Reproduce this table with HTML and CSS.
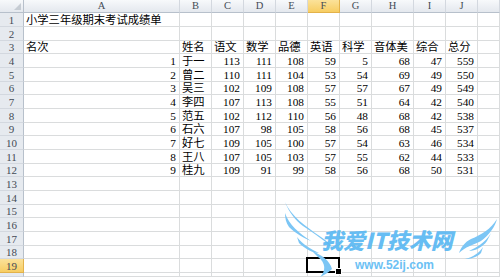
FILE: index.html
```html
<!DOCTYPE html>
<html lang="zh">
<head>
<meta charset="utf-8">
<link rel="stylesheet" href="styles.css">
</head>
<body>
<div class="sheet">
  <div class="hd corner"><span class="tri"></span></div><div class="hd">A</div><div class="hd">B</div><div class="hd">C</div><div class="hd">D</div><div class="hd">E</div><div class="hd on">F</div><div class="hd">G</div><div class="hd">H</div><div class="hd">I</div><div class="hd">J</div><div class="hd"></div>

  <div class="rh">1</div><div class="c">小学三年级期末考试成绩单</div><i></i><i></i><i></i><i></i><i></i><i></i><i></i><i></i><i></i><i></i>
  <div class="rh">2</div><i></i><i></i><i></i><i></i><i></i><i></i><i></i><i></i><i></i><i></i><i></i>
  <div class="rh">3</div><div class="c">名次</div><div class="c">姓名</div><div class="c">语文</div><div class="c">数学</div><div class="c">品德</div><div class="c">英语</div><div class="c">科学</div><div class="c">音体美</div><div class="c">综合</div><div class="c">总分</div><i></i>

  <div class="rh">4</div><div class="c n">1</div><div class="c">于一</div><div class="c n">113</div><div class="c n">111</div><div class="c n">108</div><div class="c n">59</div><div class="c n">5</div><div class="c n">68</div><div class="c n">47</div><div class="c n">559</div><i></i>
  <div class="rh">5</div><div class="c n">2</div><div class="c">曾二</div><div class="c n">110</div><div class="c n">111</div><div class="c n">104</div><div class="c n">53</div><div class="c n">54</div><div class="c n">69</div><div class="c n">49</div><div class="c n">550</div><i></i>
  <div class="rh">6</div><div class="c n">3</div><div class="c">吴三</div><div class="c n">102</div><div class="c n">109</div><div class="c n">108</div><div class="c n">57</div><div class="c n">57</div><div class="c n">67</div><div class="c n">49</div><div class="c n">549</div><i></i>
  <div class="rh">7</div><div class="c n">4</div><div class="c">李四</div><div class="c n">107</div><div class="c n">113</div><div class="c n">108</div><div class="c n">55</div><div class="c n">51</div><div class="c n">64</div><div class="c n">42</div><div class="c n">540</div><i></i>
  <div class="rh">8</div><div class="c n">5</div><div class="c">范五</div><div class="c n">102</div><div class="c n">112</div><div class="c n">110</div><div class="c n">56</div><div class="c n">48</div><div class="c n">68</div><div class="c n">42</div><div class="c n">538</div><i></i>
  <div class="rh">9</div><div class="c n">6</div><div class="c">石六</div><div class="c n">107</div><div class="c n">98</div><div class="c n">105</div><div class="c n">58</div><div class="c n">56</div><div class="c n">68</div><div class="c n">45</div><div class="c n">537</div><i></i>
  <div class="rh">10</div><div class="c n">7</div><div class="c">好七</div><div class="c n">109</div><div class="c n">105</div><div class="c n">100</div><div class="c n">57</div><div class="c n">54</div><div class="c n">63</div><div class="c n">46</div><div class="c n">534</div><i></i>
  <div class="rh">11</div><div class="c n">8</div><div class="c">王八</div><div class="c n">107</div><div class="c n">105</div><div class="c n">103</div><div class="c n">57</div><div class="c n">55</div><div class="c n">62</div><div class="c n">44</div><div class="c n">533</div><i></i>
  <div class="rh">12</div><div class="c n">9</div><div class="c">桂九</div><div class="c n">109</div><div class="c n">91</div><div class="c n">99</div><div class="c n">58</div><div class="c n">56</div><div class="c n">68</div><div class="c n">50</div><div class="c n">531</div><i></i>

  <div class="rh">13</div><i></i><i></i><i></i><i></i><i></i><i></i><i></i><i></i><i></i><i></i><i></i>
  <div class="rh">14</div><i></i><i></i><i></i><i></i><i></i><i></i><i></i><i></i><i></i><i></i><i></i>
  <div class="rh">15</div><i></i><i></i><i></i><i></i><i></i><i></i><i></i><i></i><i></i><i></i><i></i>
  <div class="rh">16</div><i></i><i></i><i></i><i></i><i></i><i></i><i></i><i></i><i></i><i></i><i></i>
  <div class="rh">17</div><i></i><i></i><i></i><i></i><i></i><i></i><i></i><i></i><i></i><i></i><i></i>
  <div class="rh">18</div><i></i><i></i><i></i><i></i><i></i><i></i><i></i><i></i><i></i><i></i><i></i>
  <div class="rh on">19</div><i></i><i></i><i></i><i></i><i></i><i class="active"><span class="sel"><span class="handle"></span></span></i><i></i><i></i><i></i><i></i><i></i>
  <div class="rh"></div><i></i><i></i><i></i><i></i><i></i><i></i><i></i><i></i><i></i><i></i><i></i>

  <div class="wm">
    <svg class="wing-l" width="60" height="80" viewBox="0 0 60 80">
      <path d="M3 3 C9 17 23 27 39 38 C45 42 49 46 51 50 C45 43 33 35 21 27 C13 21 7 13 3 3 Z" fill="#7cc6f5"/>
      <path d="M3 14 C7 26 17 34 29 42 C23 40 13 34 7 28 C4 24 3 19 3 14 Z" fill="#7cc6f5"/>
      <path d="M15 38 C21 46 29 50 37 54 C31 54 23 50 17 44 Z" fill="#7cc6f5"/>
      <path d="M30 52 C40 56 48 62 50 70 C46 74 42 76 38 78 C44 72 44 64 36 58 Z" fill="#7cc6f5"/>
    </svg>
    <span class="wm-title">我爱IT技术网</span>
    <span class="wm-url">www.52ij.com</span>
    <svg class="wing-r" width="44" height="46" viewBox="0 0 44 46">
      <path d="M40 2 C34 12 24 18 14 22 C8 25 4 30 2 36 C8 30 16 28 24 24 C32 18 38 10 40 2 Z" fill="#7cc6f5"/>
      <path d="M34 16 C28 26 20 30 12 34 C18 34 26 30 30 24 Z" fill="#7cc6f5"/>
      <path d="M26 30 C22 36 16 40 8 42 C14 42 20 40 24 36 Z" fill="#7cc6f5"/>
    </svg>
  </div>
</div>
</body>
</html>
```

FILE: styles.css
```css
html, body {
  margin: 0;
  padding: 0;
  background: #ffffff;
}

.sheet {
  position: relative;
  width: 500px;
  height: 277px;
  overflow: hidden;
  display: grid;
  grid-template-columns: 24px 156px 32px 32px 32px 32px 32px 32px 42px 32px 32px 1fr;
  grid-template-rows: 13px repeat(6, 14px 14px 13px) 14px 1fr;
  font-family: "Liberation Serif", "Noto Sans CJK SC", serif;
  font-size: 11.3px;
  color: #000;
}

.sheet > i,
.sheet > .c {
  box-sizing: border-box;
  border-right: 1px solid #dadcdd;
  border-bottom: 1px solid #dadcdd;
  font-style: normal;
}

.c {
  display: flex;
  align-items: flex-end;
  padding: 0 2px 0 2px;
  line-height: 12px;
  white-space: nowrap;
  overflow: visible;
}

.c.n {
  justify-content: flex-end;
  padding-right: 3px;
}

.hd {
  box-sizing: border-box;
  background: linear-gradient(#f7f9fb, #e4e8ee);
  border-right: 1px solid #d3d8df;
  border-bottom: 1px solid #b7c0cb;
  color: #444b55;
  font-size: 10.5px;
  display: flex;
  align-items: center;
  justify-content: center;
  line-height: 12px;
}

.hd.on {
  background: linear-gradient(#fbe29a, #f7cd62);
  border-right-color: #e3b24a;
  border-bottom-color: #e3b24a;
}

.corner {
  position: relative;
  border-right-color: #b7c0cb;
}

.tri {
  position: absolute;
  right: 2px;
  bottom: 2px;
  width: 0;
  height: 0;
  border-left: 7px solid transparent;
  border-bottom: 7px solid #c6ccd3;
}

.rh {
  box-sizing: border-box;
  background: #e6eaef;
  border-right: 1px solid #b7c0cb;
  border-bottom: 1px solid #d3d8df;
  color: #444b55;
  display: flex;
  align-items: center;
  justify-content: center;
  font-size: 11px;
  line-height: 12px;
}

.rh.on {
  background: linear-gradient(#fbe29a, #f7cd62);
  border-bottom-color: #e3b24a;
  border-right-color: #e3b24a;
}

.active {
  position: relative;
}

.sel {
  position: absolute;
  left: -2px;
  top: -2px;
  right: -1px;
  bottom: -1px;
  border: 2px solid #000;
}

.handle {
  position: absolute;
  right: -4px;
  bottom: -4px;
  width: 5px;
  height: 5px;
  background: #000;
  border: 1px solid #fff;
}

.wm {
  position: absolute;
  left: 280px;
  top: 197px;
  width: 220px;
  height: 80px;
  pointer-events: none;
}

.wing-l {
  position: absolute;
  left: 2px;
  top: 2px;
}

.wing-r {
  position: absolute;
  left: 177px;
  top: 20px;
}

.wm-title {
  position: absolute;
  left: 41px;
  top: 32px;
  font-family: "Noto Sans CJK SC", sans-serif;
  font-weight: 900;
  font-size: 22px;
  line-height: 20px;
  color: #5ab8f2;
  font-style: italic;
  letter-spacing: 0;
  opacity: 0.92;
}

.wm-url {
  position: absolute;
  left: 75px;
  top: 62px;
  font-family: "Liberation Sans", sans-serif;
  font-weight: bold;
  font-size: 12px;
  line-height: 12px;
  color: #6cc1f4;
}
```
